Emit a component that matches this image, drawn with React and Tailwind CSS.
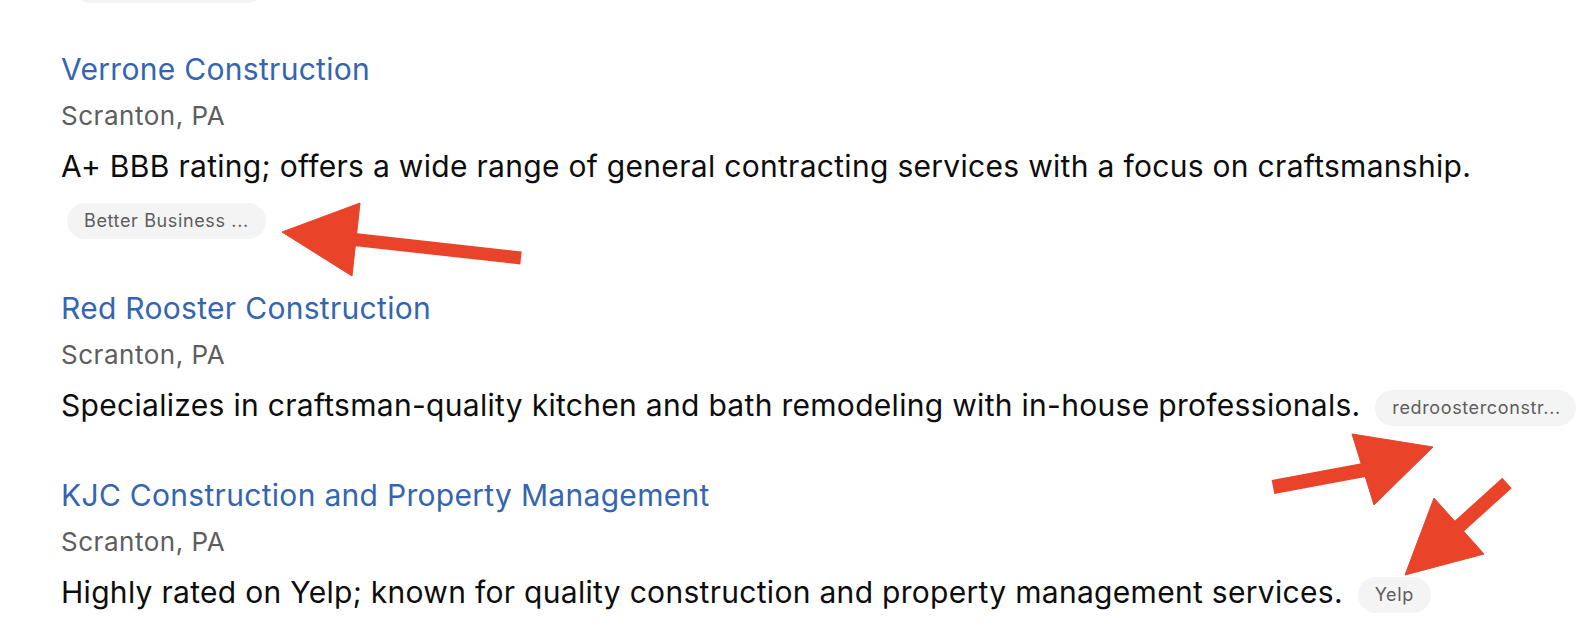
import React from 'react';

const results = [
  {
    id: 1,
    name: 'Verrone Construction',
    location: 'Scranton, PA',
    description: 'A+ BBB rating; offers a wide range of general contracting services with a focus on craftsmanship.',
    source: 'Better Business ...',
  },
  {
    id: 2,
    name: 'Red Rooster Construction',
    location: 'Scranton, PA',
    description: 'Specializes in craftsman-quality kitchen and bath remodeling with in-house professionals.',
    source: 'redroosterconstr...',
  },
  {
    id: 3,
    name: 'KJC Construction and Property Management',
    location: 'Scranton, PA',
    description: 'Highly rated on Yelp; known for quality construction and property management services.',
    source: 'Yelp',
  },
];

const Pill = ({ children }) => (
  <span className="inline-block align-middle max-w-[201px] h-[36px] px-[17px] rounded-full bg-[#f4f4f4] text-[18px] leading-[36px] tracking-[0.035em] text-[#5d5d5d] whitespace-nowrap overflow-hidden">
    {children}
  </span>
);

// red annotation arrows drawn over the list
const Arrows = () => (
  <svg className="absolute inset-0 pointer-events-none" width="1578" height="626" viewBox="0 0 1578 626">
    <g fill="#e9432a" stroke="#e9432a" strokeLinejoin="miter">
      <line x1="521" y1="258" x2="350" y2="239" strokeWidth="13" />
      <polygon points="282,232 360,203 352,276" />
      <line x1="1273" y1="487" x2="1364" y2="470" strokeWidth="14" />
      <polygon points="1433,447 1352,434 1374,505" />
      <line x1="1507" y1="483" x2="1455" y2="530" strokeWidth="14" />
      <polygon points="1405,575 1434,498 1484,554" />
    </g>
  </svg>
);

const App = () => {
  return (
    <div
      className="relative w-[1578px] h-[626px] overflow-hidden bg-white"
      style={{ fontFamily: 'Inter, "Noto Sans", sans-serif' }}
    >
      <div className="w-[1590px] pl-[61px]">
        <div className="-mt-[32px] ml-[12px] w-[192px] h-[35px] rounded-full bg-[#f4f4f4]"></div>
        <div className="mt-[43px] flex flex-col gap-[41px]">
          {results.map((r) => (
            <div key={r.id}>
              <div className="text-[30px] leading-[46px] tracking-[0.01em] text-[#3565b0]">{r.name}</div>
              <div className="text-[26px] leading-[48px] tracking-[0.02em] text-[#5d5d5d]">{r.location}</div>
              <div className="text-[30px] leading-[52px] tracking-[0.01em] text-[#0d0d0d]">
                {r.description} <span className="ml-[6px]"><Pill>{r.source}</Pill></span>
              </div>
            </div>
          ))}
        </div>
      </div>
      <Arrows />
    </div>
  );
};

export default App;
